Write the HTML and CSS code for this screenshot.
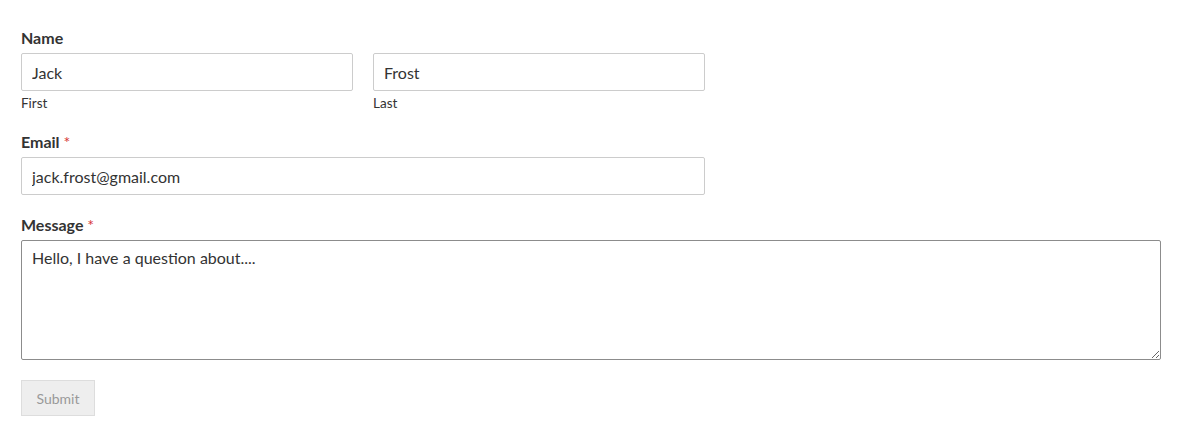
FILE: index.html
```html
<!DOCTYPE html>
<html lang="en">
<head>
    <meta charset="UTF-8">
    <meta name="viewport" content="width=device-width, initial-scale=1.0">
    <title>Contact</title>
    <link rel="stylesheet" href="styles.css">
</head>
<body>
    <form class="contact-form">
        <div class="field">
            <label class="field-label">Name</label>
            <div class="name-row">
                <div class="name-part">
                    <input type="text" class="text-input" value="Jack">
                    <span class="sublabel">First</span>
                </div>
                <div class="name-part">
                    <input type="text" class="text-input" value="Frost">
                    <span class="sublabel">Last</span>
                </div>
            </div>
        </div>

        <div class="field">
            <label class="field-label">Email <span class="required">*</span></label>
            <input type="email" class="text-input medium" value="jack.frost@gmail.com">
        </div>

        <div class="field">
            <label class="field-label">Message <span class="required">*</span></label>
            <textarea class="text-area is-focused">Hello, I have a question about....</textarea>
        </div>

        <button type="button" class="submit-btn">Submit</button>
    </form>
</body>
</html>
```

FILE: styles.css
```css
body {
    font-family: Lato, "Open Sans", sans-serif;
    background: #fff;
    color: #333;
    margin: 0;
    padding: 0;
}
.contact-form {
    width: 1140px;
    padding: 28px 21px 20px 21px;
}
.field {
    margin-bottom: 20px;
}
.field-label {
    display: block;
    font-size: 16px;
    font-weight: 700;
    line-height: 20px;
    margin-bottom: 5px;
    color: #333;
}
.required {
    color: #d63637;
    font-weight: 400;
}
.name-row {
    display: flex;
    gap: 20px;
    width: 684px;
}
.name-part {
    flex: 1;
    display: flex;
    flex-direction: column;
}
.sublabel {
    font-size: 13.5px;
    line-height: 17px;
    margin-top: 4px;
    color: #333;
}
.text-input {
    box-sizing: border-box;
    width: 100%;
    height: 38px;
    padding: 6px 10px;
    font-family: inherit;
    font-size: 16px;
    color: #333;
    border: 1px solid #ccc;
    border-radius: 2px;
    background: #fff;
    outline: none;
}
.text-input.medium {
    width: 684px;
}
.text-area {
    display: block;
    box-sizing: border-box;
    width: 100%;
    height: 120px;
    padding: 6px 10px;
    font-family: inherit;
    font-size: 16px;
    line-height: 22px;
    color: #333;
    border: 1px solid #ccc;
    border-radius: 2px;
    outline: none;
}
.text-area.is-focused {
    border-color: #8c8c8c;
}
.submit-btn {
    box-sizing: border-box;
    width: 74px;
    height: 36px;
    font-family: inherit;
    font-size: 14px;
    color: #999;
    background: #eee;
    border: 1px solid #ddd;
    border-radius: 0;
    padding: 0;
}
```
